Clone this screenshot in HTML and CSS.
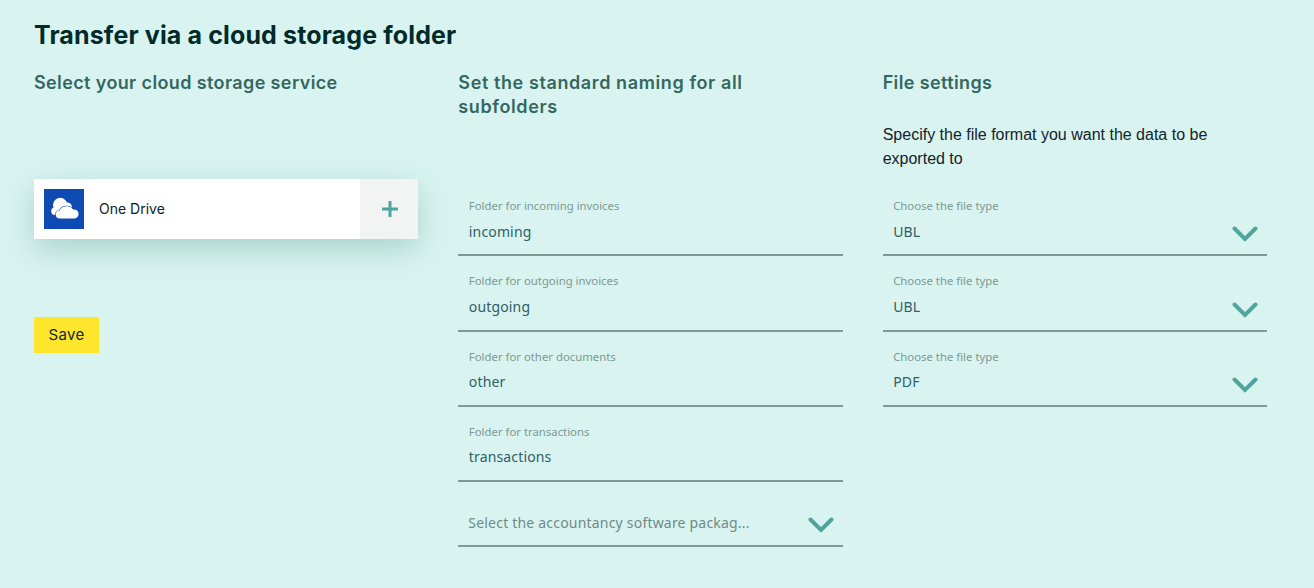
FILE: index.html
```
<!DOCTYPE html>
<html lang="en">
<head>
<meta charset="utf-8">
<title>Transfer via a cloud storage folder</title>
<link rel="stylesheet" href="styles.css">
</head>
<body>
<main class="page">
  <h1 class="title">Transfer via a cloud storage folder</h1>
  <div class="columns">
    <section class="col">
      <h2 class="subtitle">Select your cloud storage service</h2>
      <div class="card">
        <div class="card-main">
          <span class="logo">
            <svg width="40" height="40" viewBox="0 0 40 40"><path fill="#fff" d="M10 26A4 4 0 0 1 9.500 18.500A7 7 0 0 1 23 13.500A5 5 0 0 1 28 18L28 26Z"/><path fill="#fff" stroke="#0d4bb3" stroke-width="1.200" paint-order="stroke" d="M16 29.500A4 4 0 0 1 15.500 21.500A7.500 6.500 0 0 1 29 20.500A4.500 4.500 0 0 1 31 29.500Z"/></svg>
          </span>
          <span class="card-name">One Drive</span>
        </div>
        <div class="card-add">
          <svg width="16" height="16" viewBox="0 0 16 16"><path fill="none" stroke="#4fa59b" stroke-width="3" d="M0 8h16M8 0v16"/></svg>
        </div>
      </div>
      <button class="save">Save</button>
    </section>
    <section class="col">
      <h2 class="subtitle subtitle-wrap">Set the standard naming for all subfolders</h2>
      <div class="fields fields-naming">
        <div class="field"><span class="field-label">Folder for incoming invoices</span><span class="field-value">incoming</span></div>
        <div class="field"><span class="field-label">Folder for outgoing invoices</span><span class="field-value">outgoing</span></div>
        <div class="field"><span class="field-label">Folder for other documents</span><span class="field-value">other</span></div>
        <div class="field"><span class="field-label">Folder for transactions</span><span class="field-value">transactions</span></div>
        <div class="field field-select field-plain">
          <span class="field-placeholder">Select the accountancy software packag...</span>
          <svg class="chevron" width="26" height="16" viewBox="0 0 26 16"><path fill="none" stroke="#4fa59b" stroke-width="4" stroke-linecap="round" d="M2.500 2.500L13 13L23.500 2.500"/></svg>
        </div>
      </div>
    </section>
    <section class="col">
      <h2 class="subtitle">File settings</h2>
      <p class="intro">Specify the file format you want the data to be exported to</p>
      <div class="fields">
        <div class="field field-select"><span class="field-label">Choose the file type</span><span class="field-value">UBL</span>
          <svg class="chevron" width="26" height="16" viewBox="0 0 26 16"><path fill="none" stroke="#4fa59b" stroke-width="4" stroke-linecap="round" d="M2.500 2.500L13 13L23.500 2.500"/></svg></div>
        <div class="field field-select"><span class="field-label">Choose the file type</span><span class="field-value">UBL</span>
          <svg class="chevron" width="26" height="16" viewBox="0 0 26 16"><path fill="none" stroke="#4fa59b" stroke-width="4" stroke-linecap="round" d="M2.500 2.500L13 13L23.500 2.500"/></svg></div>
        <div class="field field-select"><span class="field-label">Choose the file type</span><span class="field-value">PDF</span>
          <svg class="chevron" width="26" height="16" viewBox="0 0 26 16"><path fill="none" stroke="#4fa59b" stroke-width="4" stroke-linecap="round" d="M2.500 2.500L13 13L23.500 2.500"/></svg></div>
      </div>
    </section>
  </div>
</main>
</body>
</html>
```
FILE: styles.css
```
* { box-sizing: border-box; }
html, body { margin: 0; height: 100%; }
body { background: #d9f4f0; font-family: "Liberation Sans", Arial, sans-serif; overflow: hidden; }
.page { padding: 17px 47px 0 34px; }
.title { margin: 0; font: 700 25px/36px Inter, sans-serif; color: #012a2a; letter-spacing: 0.13px; }
.columns { display: grid; grid-template-columns: repeat(3, 1fr); column-gap: 40px; margin-top: 18px; }
.col { display: flex; flex-direction: column; min-width: 0; }
.subtitle { margin: 0; font: 600 18px/24px Inter, sans-serif; color: #356760; min-height: 48px; letter-spacing: 0.38px; }
.subtitle-wrap { padding-right: 60px; letter-spacing: 0.6px; }
.card { display: flex; height: 60px; margin-top: 60px; box-shadow: 0 10px 30px rgba(60, 130, 120, .3); background: #fff; }
.card-main { flex: 1; display: flex; align-items: center; padding-left: 10px; }
.logo { width: 40px; height: 40px; background: #0d4bb3; display: flex; }
.card-name { margin-left: 15px; font: 400 14px/20px Inter, sans-serif; color: #0a1c2a; }
.card-add { width: 58px; padding-left: 1px; background: #f1f4f3; display: flex; align-items: center; justify-content: center; }
.save { align-self: flex-start; width: 65px; height: 36px; margin-top: 78px; border: 0; padding: 0; background: #ffe52b; font: 400 15px/36px Inter, sans-serif; letter-spacing: 0.3px; color: #0f2a28; }
.fields { display: flex; flex-direction: column; }
.fields-naming { margin-top: 62px; }
.field { position: relative; height: 75.250px; display: flex; flex-direction: column; justify-content: flex-end; padding: 0 0 12.700px 10.500px; border-bottom: 2px solid #7f9a94; }
.field-label { font: 400 11.350px/16px "Noto Sans", sans-serif; color: #7d9993; margin-bottom: 7.500px; }
.field-value { font: 400 14px/20px "Noto Sans", sans-serif; color: #2f5d68; letter-spacing: 0.15px; }
.field-plain { height: 65px; padding-bottom: 12px; padding-left: 10px; }
.field-placeholder { font: 400 14px/20px "Noto Sans", sans-serif; color: #6f8a88; letter-spacing: 0.2px; }
.chevron { position: absolute; right: 9px; bottom: 12px; }
.intro { margin: 4px 0 0; font-size: 16px; line-height: 24px; color: #12232a; }
.intro + .fields { margin-top: 10px; }
```
